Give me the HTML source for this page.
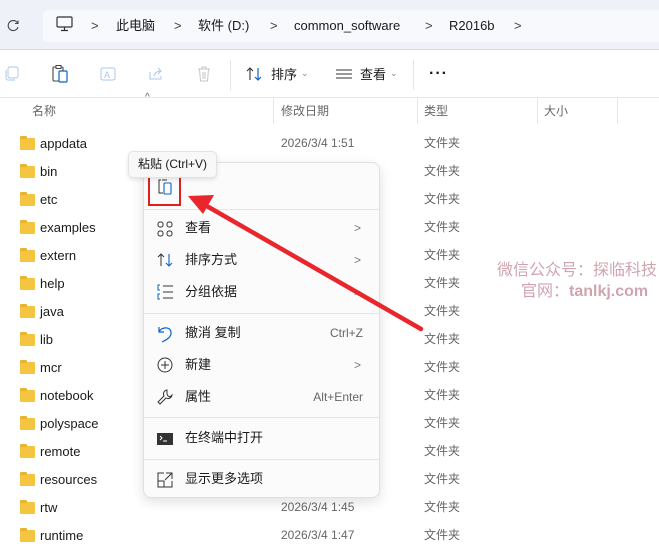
<!DOCTYPE html>
<html><head><meta charset="utf-8"><style>
*{margin:0;padding:0;box-sizing:border-box}
body{width:659px;height:554px;overflow:hidden;background:#fff;font-family:"Liberation Sans","Noto Sans CJK SC",sans-serif;font-size:12px;color:#1a1a1a;position:relative}
.a{position:absolute;white-space:nowrap;line-height:15px}
.top{position:absolute;left:0;top:0;width:659px;height:50px;background:#eef2f8;border-bottom:1px solid #d4dbe5}
.addr{position:absolute;left:43px;top:10px;width:616px;height:32px;background:#f7f9fc;border-radius:5px 0 0 5px}
.fold{position:absolute;left:20px;width:15px;height:12px;background:#f5c542;border-radius:1px}
.fold:before{content:"";position:absolute;left:0;top:-2px;width:7px;height:3px;background:#e8b530;border-radius:1px 1px 0 0}
.menu{position:absolute;left:143px;top:162px;width:237px;height:336px;background:#fbfbfb;border:1px solid #e0e0e0;border-radius:8px;box-shadow:0 4px 12px rgba(0,0,0,.12)}
.sep{position:absolute;left:0;width:235px;height:1px;background:#e5e5e5}
.mi{position:absolute;left:41px;font-size:13px;line-height:16px;white-space:nowrap}
.ch{position:absolute;left:210px;color:#777;font-size:12px;line-height:16px}
.sc{position:absolute;right:16px;color:#666;font-size:12px;line-height:16px}
.gr{color:#666}
</style></head><body>
<div class="top"><div class="addr"></div></div>
<svg class="a" style="left:6px;top:19px" width="14" height="14" viewBox="0 0 14 14"><path d="M11.5 4A5 5 0 1 0 12 8" fill="none" stroke="#444" stroke-width="1.1"/><path d="M12 1.5V4.5H9" fill="none" stroke="#444" stroke-width="1.1"/></svg>
<svg class="a" style="left:56px;top:16px" width="18" height="16" viewBox="0 0 18 16"><rect x="1" y="1" width="15" height="10" rx="1" fill="none" stroke="#333" stroke-width="1.2"/><path d="M8.5 11v3M5 14.5h7" stroke="#333" stroke-width="1.2"/></svg>
<div class="a" style="left:91px;top:18px;font-size:13px;color:#444">&gt;</div>
<div class="a" style="left:116px;top:18px;font-size:13px">此电脑</div>
<div class="a" style="left:174px;top:18px;font-size:13px;color:#444">&gt;</div>
<div class="a" style="left:198px;top:18px;font-size:13px">软件 (D:)</div>
<div class="a" style="left:270px;top:18px;font-size:13px;color:#444">&gt;</div>
<div class="a" style="left:294px;top:18px;font-size:13px">common_software</div>
<div class="a" style="left:425px;top:18px;font-size:13px;color:#444">&gt;</div>
<div class="a" style="left:449px;top:18px;font-size:13px">R2016b</div>
<div class="a" style="left:514px;top:18px;font-size:13px;color:#444">&gt;</div>
<!-- toolbar -->
<svg class="a" style="left:4px;top:66px" width="16" height="16"><rect x="4" y="1" width="10" height="11" rx="2" fill="none" stroke="#a9c8ea"/><path d="M2 4v8a2 2 0 0 0 2 2h7" fill="none" stroke="#a9c8ea"/></svg>
<svg class="a" style="left:52px;top:65px" width="16" height="18"><rect x="1" y="2" width="10" height="14" rx="1" fill="none" stroke="#444" stroke-width="1.1"/><rect x="4" y="0.5" width="5" height="3" fill="#fff" stroke="#444"/><rect x="7" y="6" width="8" height="11" rx="1" fill="#fff" stroke="#0a64c8" stroke-width="1.2"/></svg>
<svg class="a" style="left:100px;top:66px" width="18" height="16"><rect x="1" y="2" width="14" height="12" rx="2" fill="none" stroke="#a9c8ea"/><text x="4" y="12" font-size="9" fill="#a9c8ea" font-family="Liberation Sans">A</text></svg>
<svg class="a" style="left:148px;top:66px" width="16" height="16"><path d="M2 6v7h11v-3M6 10c1-4 4-5 7-5M10 2l3 3-3 3" fill="none" stroke="#a9c8ea"/></svg>
<svg class="a" style="left:196px;top:66px" width="16" height="17"><path d="M2 3h12M6 3V1h4v2M3.5 3l1 12h7l1-12M7 6v7M9 6v7" fill="none" stroke="#c4c4c4"/></svg>
<div class="a" style="left:230px;top:60px;width:1px;height:30px;background:#e5e5e5"></div>
<svg class="a" style="left:246px;top:67px" width="18" height="15"><path d="M4 13V1M1 4l3-3 3 3" fill="none" stroke="#333" stroke-width="1.1"/><path d="M12 1v12M9 10l3 3 3-3" fill="none" stroke="#0a64c8" stroke-width="1.2"/></svg>
<div class="a" style="left:271px;top:67px;font-size:13px">排序</div>
<div class="a" style="left:301px;top:66px;font-size:9px;color:#888">⌄</div>
<svg class="a" style="left:336px;top:69px" width="16" height="10"><path d="M0 1h16M0 5h16M0 9h16" stroke="#333"/></svg>
<div class="a" style="left:360px;top:67px;font-size:13px">查看</div>
<div class="a" style="left:390px;top:66px;font-size:9px;color:#888">⌄</div>
<div class="a" style="left:413px;top:60px;width:1px;height:30px;background:#e5e5e5"></div>
<div class="a" style="left:429px;top:66px;font-size:16px;font-weight:bold;letter-spacing:1px">···</div>
<!-- column header -->
<div class="a" style="left:0;top:97px;width:659px;height:1px;background:#e3e6ea"></div>
<div class="a" style="left:145px;top:90px;font-size:10px;color:#666">^</div>
<div class="a gr" style="left:32px;top:104px">名称</div>
<div class="a" style="left:273px;top:98px;width:1px;height:26px;background:#e3e6ea"></div>
<div class="a gr" style="left:281px;top:104px">修改日期</div>
<div class="a" style="left:417px;top:98px;width:1px;height:26px;background:#e3e6ea"></div>
<div class="a gr" style="left:424px;top:104px">类型</div>
<div class="a" style="left:537px;top:98px;width:1px;height:26px;background:#e3e6ea"></div>
<div class="a gr" style="left:544px;top:104px">大小</div>
<div class="a" style="left:617px;top:98px;width:1px;height:26px;background:#e3e6ea"></div>
<!-- rows -->
<div class="fold" style="top:138px"></div><div class="a" style="left:40px;top:136px;font-size:13px">appdata</div><div class="a gr" style="left:281px;top:136px">2026/3/4 1:51</div><div class="a gr" style="left:424px;top:136px">文件夹</div>
<div class="fold" style="top:166px"></div><div class="a" style="left:40px;top:164px;font-size:13px">bin</div><div class="a gr" style="left:424px;top:164px">文件夹</div>
<div class="fold" style="top:194px"></div><div class="a" style="left:40px;top:192px;font-size:13px">etc</div><div class="a gr" style="left:424px;top:192px">文件夹</div>
<div class="fold" style="top:222px"></div><div class="a" style="left:40px;top:220px;font-size:13px">examples</div><div class="a gr" style="left:424px;top:220px">文件夹</div>
<div class="fold" style="top:250px"></div><div class="a" style="left:40px;top:248px;font-size:13px">extern</div><div class="a gr" style="left:424px;top:248px">文件夹</div>
<div class="fold" style="top:278px"></div><div class="a" style="left:40px;top:276px;font-size:13px">help</div><div class="a gr" style="left:424px;top:276px">文件夹</div>
<div class="fold" style="top:306px"></div><div class="a" style="left:40px;top:304px;font-size:13px">java</div><div class="a gr" style="left:424px;top:304px">文件夹</div>
<div class="fold" style="top:334px"></div><div class="a" style="left:40px;top:332px;font-size:13px">lib</div><div class="a gr" style="left:424px;top:332px">文件夹</div>
<div class="fold" style="top:362px"></div><div class="a" style="left:40px;top:360px;font-size:13px">mcr</div><div class="a gr" style="left:424px;top:360px">文件夹</div>
<div class="fold" style="top:390px"></div><div class="a" style="left:40px;top:388px;font-size:13px">notebook</div><div class="a gr" style="left:424px;top:388px">文件夹</div>
<div class="fold" style="top:418px"></div><div class="a" style="left:40px;top:416px;font-size:13px">polyspace</div><div class="a gr" style="left:424px;top:416px">文件夹</div>
<div class="fold" style="top:446px"></div><div class="a" style="left:40px;top:444px;font-size:13px">remote</div><div class="a gr" style="left:424px;top:444px">文件夹</div>
<div class="fold" style="top:474px"></div><div class="a" style="left:40px;top:472px;font-size:13px">resources</div><div class="a gr" style="left:424px;top:472px">文件夹</div>
<div class="fold" style="top:502px"></div><div class="a" style="left:40px;top:500px;font-size:13px">rtw</div><div class="a gr" style="left:281px;top:500px">2026/3/4 1:45</div><div class="a gr" style="left:424px;top:500px">文件夹</div>
<div class="fold" style="top:530px"></div><div class="a" style="left:40px;top:528px;font-size:13px">runtime</div><div class="a gr" style="left:281px;top:528px">2026/3/4 1:47</div><div class="a gr" style="left:424px;top:528px">文件夹</div>
<!-- watermark -->
<div class="a" style="left:497px;top:262px;font-size:16px;line-height:18px;color:rgba(170,90,110,.55)">微信公众号：探临科技</div>
<div class="a" style="left:521px;top:283px;font-size:16px;line-height:18px;color:rgba(170,90,110,.55)">官网：<b>tanlkj.com</b></div>
<!-- menu -->
<div class="menu">
<div class="sep" style="top:46px"></div>
<svg class="a" style="left:13px;top:58px" width="16" height="16"><rect x="1" y="1" width="5" height="5" rx="2" fill="none" stroke="#333"/><rect x="10" y="1" width="5" height="5" rx="2" fill="none" stroke="#333"/><rect x="1" y="10" width="5" height="5" rx="2" fill="none" stroke="#333"/><rect x="10" y="10" width="5" height="5" rx="2" fill="none" stroke="#333"/></svg>
<div class="mi" style="top:57px">查看</div><div class="ch" style="top:57px">&gt;</div>
<svg class="a" style="left:13px;top:90px" width="18" height="15"><path d="M4 13V1M1 4l3-3 3 3" fill="none" stroke="#333"/><path d="M12 1v12M9 10l3 3 3-3" fill="none" stroke="#0a64c8" stroke-width="1.1"/></svg>
<div class="mi" style="top:89px">排序方式</div><div class="ch" style="top:89px">&gt;</div>
<svg class="a" style="left:13px;top:121px" width="16" height="17"><path d="M6 2h10M6 8h10M6 14h10" stroke="#333"/><path d="M3 1H1v5h2M3 10H1v5h2" fill="none" stroke="#0a64c8"/></svg>
<div class="mi" style="top:121px">分组依据</div><div class="ch" style="top:121px">&gt;</div>
<div class="sep" style="top:150px"></div>
<svg class="a" style="left:13px;top:162px" width="16" height="18"><path d="M2 2v5h5M2 7C4 2 13 1 14 7c1 5-5 8-9 10" fill="none" stroke="#0a64c8" stroke-width="1.2"/></svg>
<div class="mi" style="top:162px">撤消 复制</div><div class="sc" style="top:162px">Ctrl+Z</div>
<svg class="a" style="left:13px;top:194px" width="16" height="16"><circle cx="8" cy="8" r="7" fill="none" stroke="#333"/><path d="M8 4v8M4 8h8" stroke="#333"/></svg>
<div class="mi" style="top:194px">新建</div><div class="ch" style="top:194px">&gt;</div>
<svg class="a" style="left:13px;top:226px" width="16" height="16"><path d="M10 1a4 4 0 0 0-3 6L1 13l2 2 6-6a4 4 0 0 0 6-3l-2 2-2-1-1-2z" fill="none" stroke="#333"/></svg>
<div class="mi" style="top:226px">属性</div><div class="sc" style="top:226px">Alt+Enter</div>
<div class="sep" style="top:254px"></div>
<svg class="a" style="left:13px;top:270px" width="16" height="12"><rect width="16" height="12" fill="#333"/><path d="M3 3l2 2-2 2M6 8h4" stroke="#fff" fill="none"/></svg>
<div class="mi" style="top:267px">在终端中打开</div>
<div class="sep" style="top:296px"></div>
<svg class="a" style="left:13px;top:309px" width="16" height="16"><path d="M7 1H1v14h14V9M9 1h6v6M15 1L8 8" fill="none" stroke="#333"/><path d="M1 9h6v6" fill="none" stroke="#333"/></svg>
<div class="mi" style="top:308px">显示更多选项</div>
</div>
<!-- paste item -->
<svg class="a" style="left:157px;top:178px" width="16" height="18"><path d="M4 2H2v13h4" fill="none" stroke="#333"/><rect x="7" y="5" width="7" height="11" rx="1" fill="none" stroke="#0a64c8" stroke-width="1.1"/><path d="M5 2h5" stroke="#333"/></svg>
<div class="a" style="left:148px;top:173px;width:33px;height:33px;border:2px solid #e02020"></div>
<!-- tooltip -->
<div class="a" style="left:128px;top:151px;width:89px;height:27px;background:#f8f8f8;border:1px solid #e3e3e3;border-radius:5px;box-shadow:0 2px 4px rgba(0,0,0,.1);padding:5px 0 0 9px;font-size:12px">粘贴 (Ctrl+V)</div>
<!-- arrow -->
<svg class="a" style="left:0;top:0" width="659" height="554"><line x1="421" y1="329" x2="205" y2="205" stroke="#e8262b" stroke-width="4.5" stroke-linecap="round"/><path d="M188 196L214 195L203 214Z" fill="#e8262b"/></svg>
</body></html>
